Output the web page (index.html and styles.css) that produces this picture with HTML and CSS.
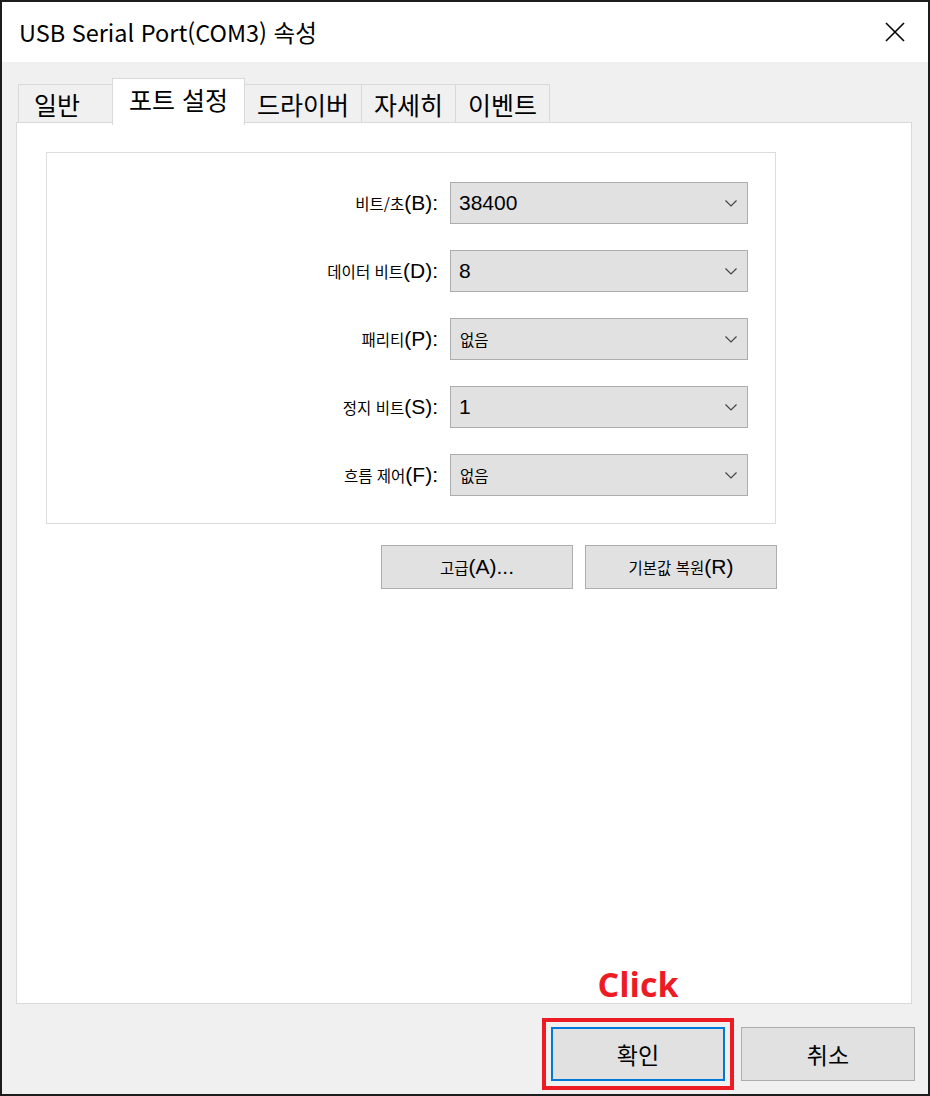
FILE: index.html
```html
<!DOCTYPE html>
<html lang="ko">
  <head>
    <meta charset="UTF-8" />
    <title>USB Serial Port(COM3) 속성</title>
    <meta name="viewport" content="width=device-width, initial-scale=1.0" />
    <link rel="stylesheet" href="styles.css">
  </head>
  <body>
    <div class="window">
      <header class="titlebar">
        <span class="title">USB Serial Port(COM3) 속성</span>
        <svg class="close" width="20" height="20" viewBox="0 0 20 20">
          <path d="M1 1 L19 19 M19 1 L1 19" stroke="#000" stroke-width="1.6" fill="none" />
        </svg>
      </header>

      <div class="body">
        <nav class="tabs">
          <div class="tab first">일반</div>
          <div class="tab active">포트 설정</div>
          <div class="tab">드라이버</div>
          <div class="tab">자세히</div>
          <div class="tab">이벤트</div>
        </nav>

        <section class="panel">
          <div class="group">
            <div class="row">
              <label class="label"><span class="ko">비트/초</span>(B):</label>
              <div class="combo">
                <span class="value">38400</span>
                <svg class="chevron" width="12" height="7" viewBox="0 0 12 7"><path d="M0.5 0.5 L6 6 L11.5 0.5" /></svg>
              </div>
            </div>
            <div class="row">
              <label class="label"><span class="ko">데이터 비트</span>(D):</label>
              <div class="combo">
                <span class="value">8</span>
                <svg class="chevron" width="12" height="7" viewBox="0 0 12 7"><path d="M0.5 0.5 L6 6 L11.5 0.5" /></svg>
              </div>
            </div>
            <div class="row">
              <label class="label"><span class="ko">패리티</span>(P):</label>
              <div class="combo">
                <span class="value ko">없음</span>
                <svg class="chevron" width="12" height="7" viewBox="0 0 12 7"><path d="M0.5 0.5 L6 6 L11.5 0.5" /></svg>
              </div>
            </div>
            <div class="row">
              <label class="label"><span class="ko">정지 비트</span>(S):</label>
              <div class="combo">
                <span class="value">1</span>
                <svg class="chevron" width="12" height="7" viewBox="0 0 12 7"><path d="M0.5 0.5 L6 6 L11.5 0.5" /></svg>
              </div>
            </div>
            <div class="row">
              <label class="label"><span class="ko">흐름 제어</span>(F):</label>
              <div class="combo">
                <span class="value ko">없음</span>
                <svg class="chevron" width="12" height="7" viewBox="0 0 12 7"><path d="M0.5 0.5 L6 6 L11.5 0.5" /></svg>
              </div>
            </div>
          </div>

          <div class="actions">
            <button class="btn"><span class="ko">고급</span>(A)...</button>
            <button class="btn"><span class="ko">기본값 복원</span>(R)</button>
          </div>
        </section>

        <footer class="footer">
          <div class="ok-wrap">
            <span class="click">Click</span>
            <button class="btn big ok">확인</button>
          </div>
          <button class="btn big">취소</button>
        </footer>
      </div>
    </div>
  </body>
</html>
```

FILE: styles.css
```css
body {
  margin: 0;
  background: #1c1c1c;
  font-family: "Liberation Sans", Arial, "Noto Sans CJK KR", sans-serif;
}
.window {
  width: 930px;
  height: 1096px;
  box-sizing: border-box;
  border: 2px solid #1c1c1c;
  background: #f0f0f0;
  display: flex;
  flex-direction: column;
}

/* title bar */
.titlebar {
  height: 60px;
  background: #ffffff;
  display: flex;
  align-items: center;
  justify-content: space-between;
  padding: 0 23px 0 17px;
}
.titlebar .title {
  font-family: "Noto Sans CJK KR", sans-serif;
  font-size: 23.5px;
  color: #000;
}

/* tabs */
.body {
  flex: 1;
  display: flex;
  flex-direction: column;
  padding: 16px 0 0 14px;
}
.tabs {
  display: flex;
  align-items: flex-end;
  padding-left: 2px;
  height: 44px;
  position: relative;
  z-index: 1;
}
.tab {
  height: 38px;
  line-height: 38px;
  box-sizing: border-box;
  padding: 0 12px;
  border: 1px solid #d9d9d9;
  border-bottom: none;
  border-left: none;
  background: #f0f0f0;
  font-family: "Noto Sans CJK KR", sans-serif;
  font-size: 25px;
  color: #000;
}
.tab.first {
  border-left: 1px solid #d9d9d9;
  min-width: 95px;
  padding-left: 15px;
}
.tab.active {
  height: 47px;
  margin-bottom: -3px;
  line-height: 41px;
  background: #ffffff;
  border-left: 1px solid #d9d9d9;
  margin-left: -1px;
  padding: 0 16px;
}

/* panel */
.panel {
  flex: 1;
  margin-right: 16px;
  background: #ffffff;
  border: 1px solid #d9d9d9;
  padding: 29px 0 0 29px;
}
.group {
  width: 730px;
  box-sizing: border-box;
  border: 1px solid #dcdcdc;
  padding: 29px 27px 27px 0;
  display: flex;
  flex-direction: column;
  gap: 26px;
}
.row {
  display: flex;
  justify-content: flex-end;
  align-items: center;
  gap: 12px;
}
.label {
  font-size: 21px;
  color: #000;
}
.ko {
  font-family: "Noto Sans CJK KR", sans-serif;
  font-size: 15.5px;
}
.combo {
  width: 298px;
  height: 42px;
  box-sizing: border-box;
  border: 1px solid #adadad;
  background: #e1e1e1;
  display: flex;
  align-items: center;
  justify-content: space-between;
  padding: 0 10px 0 8px;
}
.combo .value {
  font-size: 21px;
  color: #000;
}
.combo .value.ko {
  font-size: 15.5px;
  padding-left: 1px;
}
.chevron path {
  fill: none;
  stroke: #444;
  stroke-width: 1.2;
}

.actions {
  width: 731px;
  display: flex;
  justify-content: flex-end;
  gap: 12px;
  margin-top: 21px;
}
.btn {
  width: 192px;
  height: 44px;
  border: 1px solid #adadad;
  background: #e1e1e1;
  font-family: "Liberation Sans", Arial, sans-serif;
  font-size: 21px;
  color: #000;
  padding: 0;
}

/* footer buttons */
.footer {
  display: flex;
  justify-content: flex-end;
  gap: 16px;
  padding: 23px 13px 13px 0;
}
.btn.big {
  width: 174px;
  height: 54px;
  font-family: "Noto Sans CJK KR", sans-serif;
  font-size: 23px;
}
.btn.ok {
  border: 2px solid #0078d7;
  outline: 4px solid #ed1c24;
  outline-offset: 5px;
}
.ok-wrap {
  position: relative;
}
.click {
  position: absolute;
  left: 0;
  right: 0;
  top: -66px;
  text-align: center;
  font-family: "Open Sans", "Liberation Sans", sans-serif;
  font-weight: bold;
  font-size: 34px;
  color: #ed1c24;
}
```
